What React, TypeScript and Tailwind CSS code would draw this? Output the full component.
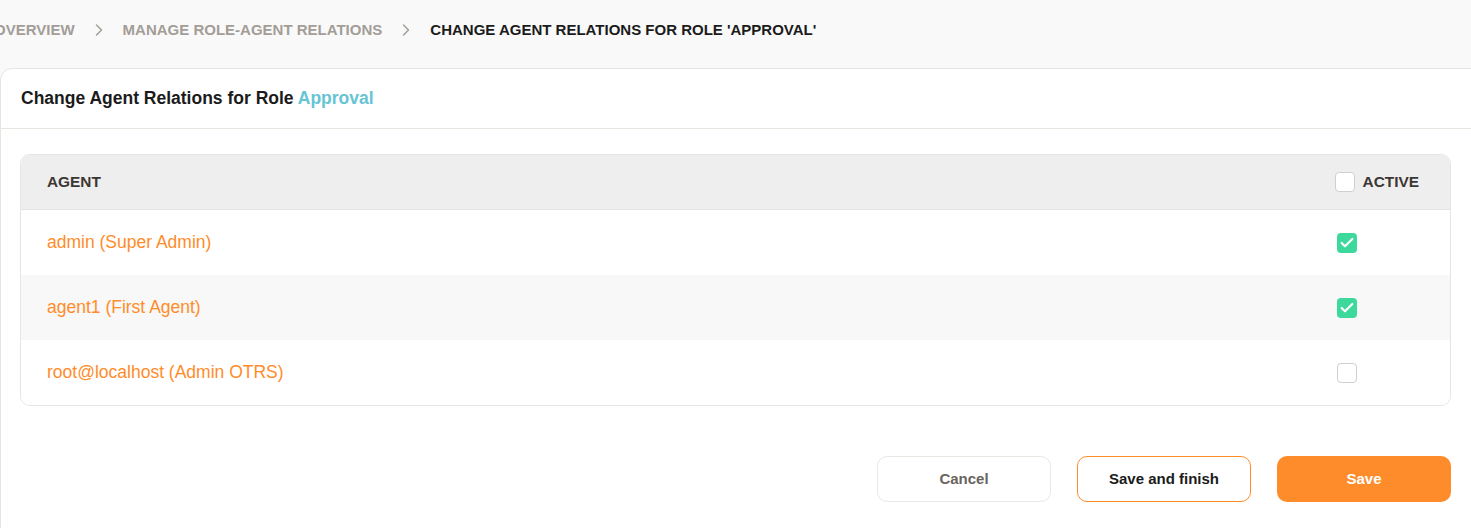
import { ChevronRight, Check } from "lucide-react";

const agents = [
  { name: "admin (Super Admin)", active: true },
  { name: "agent1 (First Agent)", active: true },
  { name: "root@localhost (Admin OTRS)", active: false },
];

const Box = ({ checked }: { checked: boolean }) =>
  checked ? (
    <div className="w-5 h-5 rounded-[4px] bg-[#3dd89b] flex items-center justify-center">
      <Check className="w-4 h-4 text-white" strokeWidth={3.25} />
    </div>
  ) : (
    <div className="w-5 h-5 rounded-[4px] border border-[#cfcfcf] bg-white" />
  );

export default function App() {
  return (
    <div
      className="h-[528px] bg-[#f9f9f9] overflow-hidden"
      style={{ fontFamily: "'Liberation Sans', Arial, sans-serif" }}
    >
      <nav className="h-[60px] mb-[8px] flex items-center -ml-[6px] text-[15px] font-bold uppercase whitespace-nowrap">
        <span className="text-[#a39d97]">Overview</span>
        <ChevronRight className="w-5 h-5 mx-[14px] text-[#a39d97]" strokeWidth={1.75} />
        <span className="text-[#a39d97]">Manage Role-Agent Relations</span>
        <ChevronRight className="w-5 h-5 mx-[14px] text-[#a39d97]" strokeWidth={1.75} />
        <span className="text-[#1b1b1b]">Change Agent Relations for Role 'Approval'</span>
      </nav>

      <div className="bg-white border border-[#e8e4df] rounded-tl-xl -mr-[20px] h-[480px]">
        <div className="h-[60px] flex items-center px-[20px] border-b border-[#e8e4df]">
          <h1 className="text-[17.5px] font-bold text-[#1b1b1b]">
            Change Agent Relations for Role <span className="text-[#67c4d3]">Approval</span>
          </h1>
        </div>

        <div className="pt-[25px] pl-[19px] pr-[39px]">
          <div className="border border-[#e8e4df] rounded-[10px] overflow-hidden">
            <div className="h-[55px] bg-[#eeeeee] border-b border-[#e3e3e3] flex items-center pl-[26px] pr-[31px] text-[15.4px] font-bold text-[#3b3634]">
              <span className="flex-1">AGENT</span>
              <div className="flex items-center gap-2">
                <Box checked={false} />
                <span>ACTIVE</span>
              </div>
            </div>
            {agents.map((a, i) => (
              <div
                key={i}
                className={`h-[65px] flex items-center pl-[26px] pr-[93px] ${i === 1 ? "bg-[#f8f8f8]" : "bg-white"}`}
              >
                <span className="flex-1 text-[17.5px] text-[#ff8c2a]">{a.name}</span>
                <Box checked={a.active} />
              </div>
            ))}
          </div>

          <div className="mt-[50px] flex justify-end gap-[26px] text-[15px] font-bold">
            <button className="w-[174px] h-[46px] rounded-[10px] border border-[#ebe7e2] bg-white text-[#6a6460]">
              Cancel
            </button>
            <button className="w-[174px] h-[46px] rounded-[10px] border border-[#ff8c2a] bg-white text-[#1b1b1b]">
              Save and finish
            </button>
            <button className="w-[174px] h-[46px] rounded-[10px] bg-[#ff8c2a] text-white">
              Save
            </button>
          </div>
        </div>
      </div>
    </div>
  );
}
